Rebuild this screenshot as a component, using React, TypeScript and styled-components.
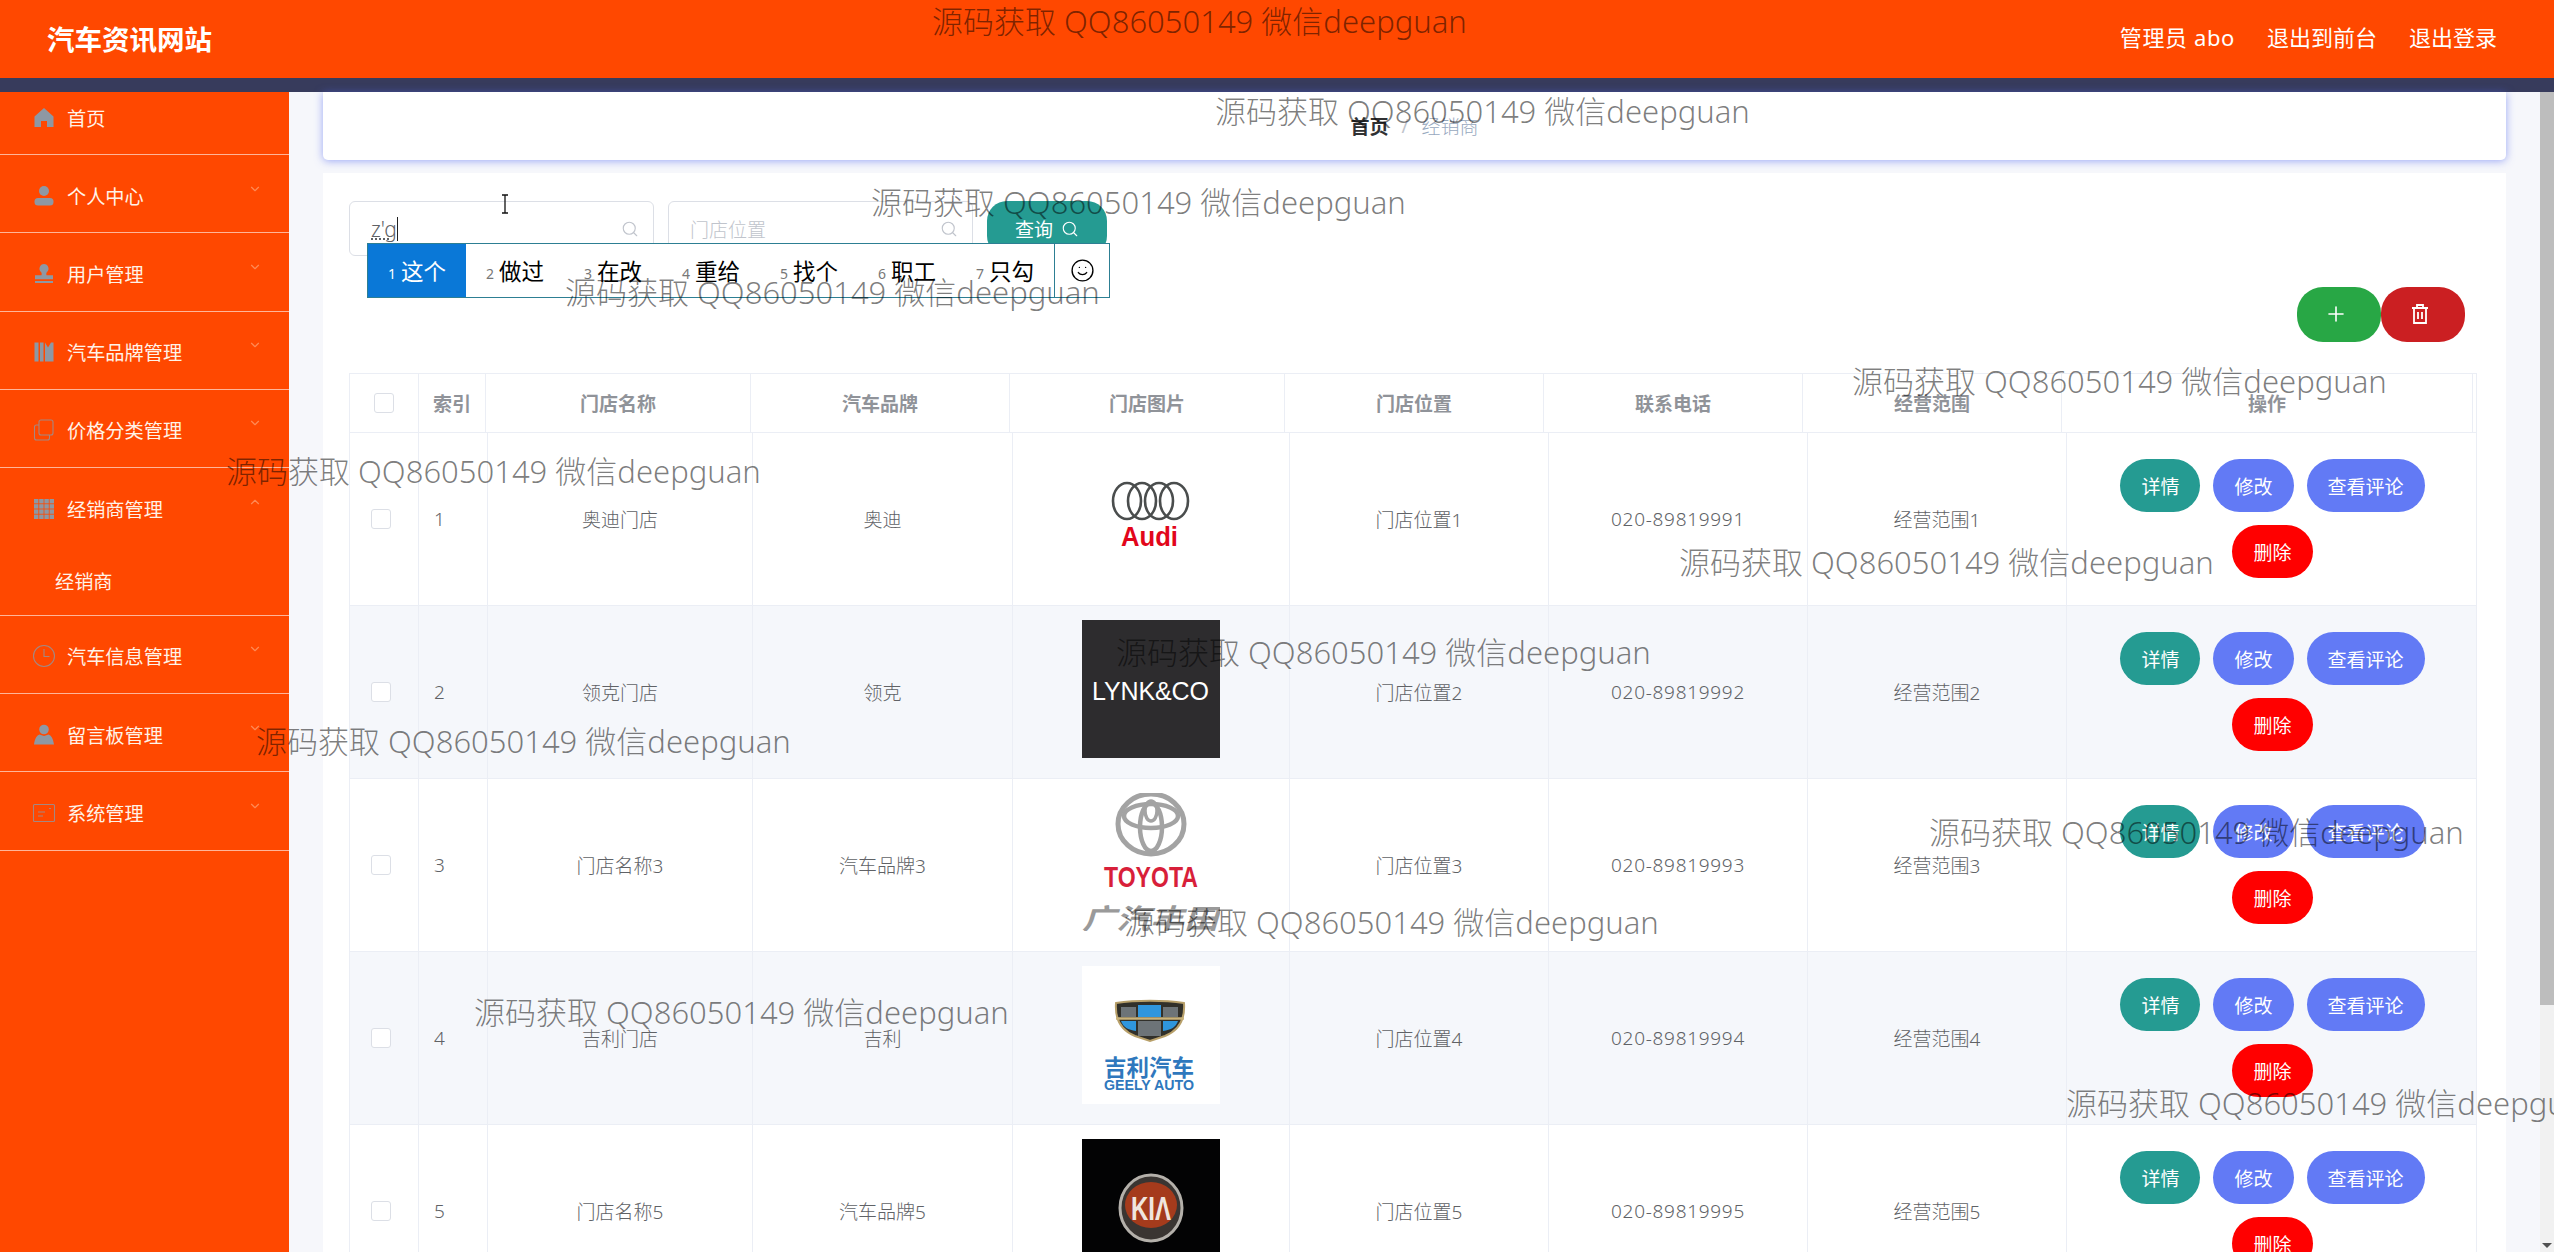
import { ReactNode } from 'react';
import styled, { createGlobalStyle } from 'styled-components';
import { ChevronDown, ChevronUp, Plus, Search, Smile } from 'lucide-react';

const FONT = '"Noto Sans", "Noto Sans CJK SC", sans-serif';

const GlobalStyle = createGlobalStyle`
  html, body {
    margin: 0;
    height: 100%;
    overflow: hidden;
    background: #f6f7fb;
    font-family: ${FONT};
  }
`;

const Page = styled.div`
  position: relative;
  width: 2554px;
  height: 1252px;
  overflow: hidden;
  display: flex;
  flex-direction: column;
`;

const TopBar = styled.header`
  flex: none;
  box-sizing: border-box;
  height: 92px;
  background: #ff4800;
  border-bottom: 14px solid #373b5c;
  display: flex;
  align-items: center;
  justify-content: space-between;
  padding: 0 57px 3px 47px;
  color: #fff;
`;

const Brand = styled.div`
  font-size: 27.5px;
  font-weight: 700;
`;

const TopLinks = styled.nav`
  display: flex;
  gap: 32px;
  padding-bottom: 4px;
  font-size: 22px;
`;

const AdminName = styled.span`
  letter-spacing: 0.6px;
`;

const Body = styled.div`
  flex: 1;
  min-height: 0;
  display: flex;
`;

const Sidebar = styled.aside`
  flex: none;
  width: 289px;
  background: #ff4800;
  color: #fff3e8;
  font-size: 19.2px;
`;

const MenuRow = styled.div<{ $first?: boolean; $plain?: boolean }>`
  box-sizing: border-box;
  height: ${(p) => (p.$first ? '63px' : '78.25px')};
  padding: ${(p) => (p.$first ? '0 27px 11px 32px' : '4px 27px 0 32px')};
  display: flex;
  align-items: center;
  border-bottom: ${(p) => (p.$plain ? 'none' : '1px solid rgba(255, 255, 255, 0.6)')};
`;

const MenuIcon = styled.span`
  flex: none;
  width: 24px;
  height: 24px;
  margin-right: 11px;
  color: #8e98a3;
  display: flex;
  align-items: center;
  justify-content: center;
`;

const MenuLabel = styled.span`
  flex: 1;
`;

const MenuArrow = styled.span`
  flex: none;
  width: 14px;
  height: 14px;
  margin-top: -14px;
  color: #ff8a55;
  display: flex;
`;

const SubRow = styled.div`
  box-sizing: border-box;
  height: 69.5px;
  padding: 0 0 0 55px;
  display: flex;
  align-items: center;
  border-bottom: 1px solid rgba(255, 255, 255, 0.6);
`;

const Main = styled.main`
  flex: 1;
  min-width: 0;
  padding: 0 34px;
`;

const CrumbCard = styled.div`
  height: 68px;
  background: #fff;
  border-radius: 0 0 5px 5px;
  box-shadow: 0 1px 9px rgba(78, 100, 240, 0.55);
  display: flex;
  align-items: center;
  justify-content: center;
  gap: 13px;
  font-size: 19px;
`;

const CrumbHome = styled.span`
  color: #303133;
  font-weight: 700;
`;

const CrumbSep = styled.span`
  color: #c0c4cc;
`;

const CrumbCurrent = styled.span`
  color: #97a8be;
  font-weight: 300;
`;

const Panel = styled.section`
  position: relative;
  margin-top: 13px;
  padding: 28px 29px 0 26px;
  background: #fff;
`;

const SearchRow = styled.div`
  display: flex;
  gap: 14px;
`;

const SearchField = styled.div`
  box-sizing: border-box;
  width: 305px;
  height: 55px;
  padding: 0 14px 0 21px;
  border: 1px solid #dcdfe6;
  border-radius: 6px;
  display: flex;
  align-items: center;
  justify-content: space-between;
  font-size: 19px;
  font-weight: 300;
  color: #606266;
`;

const Composing = styled.span`
  font-size: 21px;
  text-decoration: underline dotted;
  border-right: 1.5px solid #222;
  line-height: 24px;
`;

const Placeholder = styled.span`
  color: #c0c4cc;
`;

const QueryButton = styled.button`
  box-sizing: border-box;
  width: 120px;
  height: 55px;
  border: none;
  border-radius: 20px;
  background: #259b92;
  color: #fff;
  font: 19px ${FONT};
  display: flex;
  align-items: center;
  justify-content: center;
  gap: 8px;
`;

const ImeBar = styled.div`
  position: absolute;
  left: 44px;
  top: 70px;
  box-sizing: border-box;
  width: 743px;
  height: 55px;
  background: #fff;
  border: 1px solid #2d7f93;
  display: flex;
  color: #000;
  font-size: 22.5px;
`;

const Candidate = styled.div<{ $active?: boolean }>`
  flex: none;
  width: 98px;
  padding-left: 20px;
  box-sizing: border-box;
  display: flex;
  align-items: center;
  gap: 5px;
  background: ${(p) => (p.$active ? '#0a78d7' : 'transparent')};
  color: ${(p) => (p.$active ? '#fff' : '#000')};
`;

const CandidateIndex = styled.span<{ $active?: boolean }>`
  font-size: 14px;
  margin-top: 5px;
  color: ${(p) => (p.$active ? '#fff' : '#777')};
`;

const ImeEmoji = styled.div`
  margin-left: auto;
  width: 56px;
  border-left: 1px solid #2d7f93;
  display: flex;
  align-items: center;
  justify-content: center;
`;

const TextCursor = styled.svg`
  position: absolute;
  left: 177px;
  top: 21px;
`;

const ActionRow = styled.div`
  display: flex;
  justify-content: flex-end;
  padding-right: 12px;
  margin-top: 31px;
`;

const RoundAction = styled.button<{ $color: string }>`
  width: 84px;
  height: 55px;
  border: none;
  border-radius: 26px;
  background: ${(p) => p.$color};
  color: #fff;
  padding: 0 6px 2px 0;
  display: flex;
  align-items: center;
  justify-content: center;
`;

const Table = styled.div`
  margin-top: 31px;
  border-left: 1px solid #ebeef5;
  border-right: 1px solid #ebeef5;
  box-sizing: border-box;
`;

const HeadRow = styled.div`
  display: grid;
  grid-template-columns: 69px 67px 265px 259px 275px 259px 259px 259px 411px;
  height: 58px;
  border-top: 1px solid #ebeef5;
  border-bottom: 1px solid #ebeef5;
`;

const HeadCell = styled.div`
  border-right: 1px solid #ebeef5;
  display: flex;
  align-items: center;
  justify-content: center;
  font-size: 19px;
  font-weight: 700;
  color: #909399;
`;

const DataRow = styled.div<{ $stripe: boolean }>`
  display: grid;
  grid-template-columns: 69px 69px 265px 260px 277px 259px 259px 259px 411px;
  height: 173px;
  box-sizing: border-box;
  border-bottom: 1px solid #ebeef5;
  background: ${(p) => (p.$stripe ? '#f5f7fb' : '#fff')};
`;

const DataCell = styled.div<{ $align?: string }>`
  border-right: 1px solid #ebeef5;
  display: flex;
  align-items: center;
  justify-content: ${(p) => p.$align ?? 'center'};
  font-size: 19px;
  font-weight: 300;
  color: #606266;
`;

const PhoneCell = styled(DataCell)`
  letter-spacing: 0.7px;
`;

const IndexCell = styled(DataCell)`
  padding-left: 15px;
`;

const CheckCell = styled(DataCell)`
  padding-right: 6px;
`;

const ImageCell = styled(DataCell)`
  align-items: flex-start;
  padding-top: 14px;
`;

const OpsCell = styled(DataCell)`
  border-right: none;
  box-sizing: border-box;
  padding: 26px 20px 0;
  align-items: flex-start;
  align-content: flex-start;
  flex-wrap: wrap;
  gap: 13px;
`;

const Checkbox = styled.span`
  display: block;
  box-sizing: border-box;
  width: 20px;
  height: 20px;
  background: #fff;
  border: 1px solid #dcdfe6;
  border-radius: 3px;
`;

const PillButton = styled.button<{ $color: string }>`
  height: 53px;
  padding: 0 21px;
  border: none;
  border-radius: 27px;
  background: ${(p) => p.$color};
  color: #fff;
  font: 19px ${FONT};
`;

const LogoBox = styled.svg<{ $bg: string }>`
  display: block;
  width: 138px;
  height: 138px;
  background: ${(p) => p.$bg};
`;

const ScrollTrack = styled.div`
  position: relative;
  flex: none;
  width: 14px;
  background: #f1f1f1;
`;

const ScrollThumb = styled.div`
  height: 913px;
  background: #bdbdbd;
`;

const ScrollArrow = styled.span`
  position: absolute;
  left: 2px;
  bottom: 4px;
  border-left: 5px solid transparent;
  border-right: 5px solid transparent;
  border-top: 5px solid #505050;
`;

const Watermark = styled.div<{ $x: number; $y: number }>`
  position: absolute;
  left: ${(p) => p.$x}px;
  top: ${(p) => p.$y - 22}px;
  line-height: 44px;
  font-size: 31px;
  font-weight: 300;
  white-space: nowrap;
  color: rgba(0, 0, 0, 0.52);
  pointer-events: none;
`;

const solid = (children: ReactNode) => (
  <svg width="22" height="22" viewBox="0 0 22 22" fill="currentColor">
    {children}
  </svg>
);

const line = (children: ReactNode) => (
  <svg width="24" height="24" viewBox="0 0 24 24" fill="none" stroke="currentColor" strokeWidth="1.1" opacity="0.8">
    {children}
  </svg>
);

const icons = {
  home: solid(<path d="M11 1 1.500 9.500V20h6.500v-6h6v6h6.500V9.500z" />),
  user: solid(
    <>
      <circle cx="11" cy="6" r="5" />
      <rect x="1.500" y="13" width="19" height="7.500" rx="3.500" />
    </>
  ),
  stamp: solid(
    <>
      <path d="M11 1a4.600 4.600 0 0 0-3 8c.8.900.9 2.200.4 3.300H2v4h18v-4h-6.400c-.5-1.100-.4-2.400.4-3.300a4.600 4.600 0 0 0-3-8z" />
      <rect x="2" y="18" width="18" height="2" />
    </>
  ),
  brand: solid(<path d="M1.500 1.500h4v19h-4zM7 1.500h3.500v19H7zM12 1.500l3 5 3-5h2.500v19H12z" />),
  copy: line(
    <>
      <rect x="7" y="2" width="14" height="15" rx="2" />
      <path d="M7 7H4.500A2 2 0 0 0 2.500 9v11a2 2 0 0 0 2 2h11a2 2 0 0 0 2-2v-3" />
    </>
  ),
  grid: solid(
    <>
      {[1, 6.200, 11.400, 16.600].flatMap((y) =>
        [1, 6.200, 11.400, 16.600].map((x) => <rect key={`${x}-${y}`} x={x} y={y} width="4.400" height="4.400" />)
      )}
    </>
  ),
  clock: line(
    <>
      <circle cx="12" cy="12" r="10.500" />
      <path d="M12 5v7.500h5.500" />
    </>
  ),
  person: solid(
    <>
      <circle cx="11" cy="5.500" r="4.800" />
      <path d="M6.500 10.500 11 12l4.500-1.500c2.600.8 4.700 4 5.500 10H1c.8-6 2.900-9.200 5.500-10z" />
    </>
  ),
  card: line(
    <>
      <rect x="1.500" y="3.500" width="21" height="17" rx="1" />
      <path d="M6 11h7M6 15h5M17 7.500h2" />
    </>
  ),
};

const menu: { label: string; icon: keyof typeof icons; open?: boolean; first?: boolean; arrow?: boolean }[] = [
  { label: '首页', icon: 'home', first: true },
  { label: '个人中心', icon: 'user', arrow: true },
  { label: '用户管理', icon: 'stamp', arrow: true },
  { label: '汽车品牌管理', icon: 'brand', arrow: true },
  { label: '价格分类管理', icon: 'copy', arrow: true },
  { label: '经销商管理', icon: 'grid', arrow: true, open: true },
  { label: '汽车信息管理', icon: 'clock', arrow: true },
  { label: '留言板管理', icon: 'person', arrow: true },
  { label: '系统管理', icon: 'card', arrow: true },
];

const AudiLogo = () => (
  <LogoBox $bg="transparent" viewBox="0 0 138 138">
    <g fill="none" stroke="#4a4d4d" strokeWidth="2.600">
      <ellipse cx="45" cy="54" rx="14" ry="18" />
      <ellipse cx="60" cy="54" rx="14" ry="18" />
      <ellipse cx="77" cy="54" rx="14" ry="18" />
      <ellipse cx="92" cy="54" rx="14" ry="18" />
    </g>
    <text x="39" y="99" fontFamily="Liberation Sans" fontWeight="700" fontSize="27" fill="#e2061b" textLength="57" lengthAdjust="spacingAndGlyphs">
      Audi
    </text>
  </LogoBox>
);

const LynkLogo = () => (
  <LogoBox $bg="#2d2c2e" viewBox="0 0 138 138">
    <text x="10" y="80" fontFamily="Liberation Sans" fontSize="25" fill="#fff" textLength="117" lengthAdjust="spacing">
      LYNK&amp;CO
    </text>
  </LogoBox>
);

const ToyotaLogo = () => (
  <LogoBox $bg="transparent" viewBox="0 0 138 138">
    <g fill="none" stroke="#a3a3a3">
      <ellipse cx="69" cy="31" rx="33" ry="30" strokeWidth="5" />
      <ellipse cx="69" cy="23" rx="27" ry="12" strokeWidth="4.500" />
      <ellipse cx="69" cy="34" rx="11" ry="24" strokeWidth="4.500" />
      <ellipse cx="69" cy="18" rx="6" ry="10" strokeWidth="3.500" />
    </g>
    <text x="22" y="94" fontFamily="Liberation Sans" fontWeight="700" fontSize="30" fill="#d81f3a" textLength="94" lengthAdjust="spacingAndGlyphs">
      TOYOTA
    </text>
    <text x="0" y="136" fontFamily="Noto Sans CJK SC" fontWeight="700" fontStyle="italic" fontSize="28" fill="#9a9a9a" textLength="136" lengthAdjust="spacingAndGlyphs">
      广汽丰田
    </text>
  </LogoBox>
);

const GeelyLogo = () => (
  <LogoBox $bg="#fff" viewBox="0 0 138 138">
    <path d="M34 37c20-3 48-3 68 0 1 14-4 27-19 33l-15 5-15-5C38 64 33 51 34 37z" fill="#31302a" stroke="#b8a06a" strokeWidth="2" />
    <rect x="39" y="41" width="15" height="10" fill="#6d7478" />
    <rect x="56" y="39" width="23" height="12" fill="#2f96dd" />
    <rect x="81" y="41" width="15" height="10" fill="#6d7478" />
    <path d="M39 55h15v10c-8-1-13-4-15-10z" fill="#2f96dd" />
    <rect x="56" y="55" width="23" height="15" fill="#6d7478" />
    <path d="M81 55h15c-2 6-7 9-15 10z" fill="#2f96dd" />
    <path d="M34 52.500h68" stroke="#c9b27a" strokeWidth="2.500" />
    <text x="22" y="110" fontFamily="Noto Sans CJK SC" fontWeight="700" fontSize="23" fill="#2f78bd" textLength="90" lengthAdjust="spacingAndGlyphs">
      吉利汽车
    </text>
    <text x="22" y="123.500" fontFamily="Liberation Sans" fontWeight="700" fontSize="14.500" fill="#2f78bd" textLength="90" lengthAdjust="spacingAndGlyphs">
      GEELY AUTO
    </text>
  </LogoBox>
);

const KiaLogo = () => (
  <LogoBox $bg="#030304" viewBox="0 0 138 138">
    <ellipse cx="69" cy="69" rx="31" ry="33" fill="#3a3532" stroke="#b4b0aa" strokeWidth="3" />
    <ellipse cx="69" cy="66" rx="26" ry="23" fill="#a53b1c" />
    <text x="69" y="81" textAnchor="middle" fontFamily="Liberation Sans" fontWeight="700" fontSize="34" fill="#f0e6df" textLength="40" lengthAdjust="spacingAndGlyphs">
      KIΛ
    </text>
  </LogoBox>
);

const rows = [
  { id: 1, name: '奥迪门店', brand: '奥迪', logo: <AudiLogo /> },
  { id: 2, name: '领克门店', brand: '领克', logo: <LynkLogo /> },
  { id: 3, name: '门店名称3', brand: '汽车品牌3', logo: <ToyotaLogo /> },
  { id: 4, name: '吉利门店', brand: '吉利', logo: <GeelyLogo /> },
  { id: 5, name: '门店名称5', brand: '汽车品牌5', logo: <KiaLogo /> },
];

const candidates = ['这个', '做过', '在改', '重给', '找个', '职工', '只勾'];

const watermarks = [
  [932, 21],
  [1215, 111],
  [871, 202],
  [565, 292],
  [1852, 381],
  [226, 471],
  [1679, 562],
  [1116, 652],
  [256, 741],
  [1929, 832],
  [1124, 922],
  [474, 1012],
  [2066, 1103],
];

export default function App() {
  return (
    <Page>
      <GlobalStyle />
      <TopBar>
        <Brand>汽车资讯网站</Brand>
        <TopLinks>
          <AdminName>管理员 abo</AdminName>
          <span>退出到前台</span>
          <span>退出登录</span>
        </TopLinks>
      </TopBar>
      <Body>
        <Sidebar>
          {menu.map((item) => (
            <div key={item.label}>
              <MenuRow $first={item.first} $plain={item.open}>
                <MenuIcon>{icons[item.icon]}</MenuIcon>
                <MenuLabel>{item.label}</MenuLabel>
                {item.arrow && (
                  <MenuArrow>{item.open ? <ChevronUp size={14} /> : <ChevronDown size={14} />}</MenuArrow>
                )}
              </MenuRow>
              {item.open && <SubRow>经销商</SubRow>}
            </div>
          ))}
        </Sidebar>
        <Main>
          <CrumbCard>
            <CrumbHome>首页</CrumbHome>
            <CrumbSep>/</CrumbSep>
            <CrumbCurrent>经销商</CrumbCurrent>
          </CrumbCard>
          <Panel>
            <SearchRow>
              <SearchField>
                <Composing>z'g</Composing>
                <Search size={18} color="#c0c4cc" strokeWidth={1.5} />
              </SearchField>
              <SearchField>
                <Placeholder>门店位置</Placeholder>
                <Search size={18} color="#c0c4cc" strokeWidth={1.5} />
              </SearchField>
              <QueryButton>
                查询
                <Search size={18} strokeWidth={1.5} />
              </QueryButton>
            </SearchRow>
            <TextCursor width="10" height="20" viewBox="0 0 10 20" fill="none" stroke="#111" strokeWidth="1.300">
              <path d="M2 1h6M5 1v18M2 19h6" />
            </TextCursor>
            <ImeBar>
              {candidates.map((text, i) => (
                <Candidate key={text} $active={i === 0}>
                  <CandidateIndex $active={i === 0}>{i + 1}</CandidateIndex>
                  {text}
                </Candidate>
              ))}
              <ImeEmoji>
                <Smile size={25} strokeWidth={1.3} color="#000" />
              </ImeEmoji>
            </ImeBar>
            <ActionRow>
              <RoundAction $color="#28a745">
                <Plus size={24} strokeWidth={1.6} />
              </RoundAction>
              <RoundAction $color="#cb1f22">
                <svg width="22" height="22" viewBox="0 0 22 22" fill="none" stroke="#fff" strokeWidth="1.800">
                  <path d="M3 5h16M8 5V2h6v3M5 5v15h12V5M9 9v7M13 9v7" />
                </svg>
              </RoundAction>
            </ActionRow>
            <Table>
              <HeadRow>
                <HeadCell>
                  <Checkbox />
                </HeadCell>
                <HeadCell>索引</HeadCell>
                <HeadCell>门店名称</HeadCell>
                <HeadCell>汽车品牌</HeadCell>
                <HeadCell>门店图片</HeadCell>
                <HeadCell>门店位置</HeadCell>
                <HeadCell>联系电话</HeadCell>
                <HeadCell>经营范围</HeadCell>
                <HeadCell>操作</HeadCell>
              </HeadRow>
              {rows.map((row, i) => (
                <DataRow key={row.id} $stripe={i % 2 === 1}>
                  <CheckCell>
                    <Checkbox />
                  </CheckCell>
                  <IndexCell $align="flex-start">{row.id}</IndexCell>
                  <DataCell>{row.name}</DataCell>
                  <DataCell>{row.brand}</DataCell>
                  <ImageCell>{row.logo}</ImageCell>
                  <DataCell>门店位置{row.id}</DataCell>
                  <PhoneCell>020-8981999{row.id}</PhoneCell>
                  <DataCell>经营范围{row.id}</DataCell>
                  <OpsCell>
                    <PillButton $color="#259b92">详情</PillButton>
                    <PillButton $color="#627af5">修改</PillButton>
                    <PillButton $color="#627af5">查看评论</PillButton>
                    <PillButton $color="#ff0000">删除</PillButton>
                  </OpsCell>
                </DataRow>
              ))}
            </Table>
          </Panel>
        </Main>
        <ScrollTrack>
          <ScrollThumb />
          <ScrollArrow />
        </ScrollTrack>
      </Body>
      {watermarks.map(([x, y]) => (
        <Watermark key={x} $x={x} $y={y}>
          源码获取 QQ86050149 微信deepguan
        </Watermark>
      ))}
    </Page>
  );
}
